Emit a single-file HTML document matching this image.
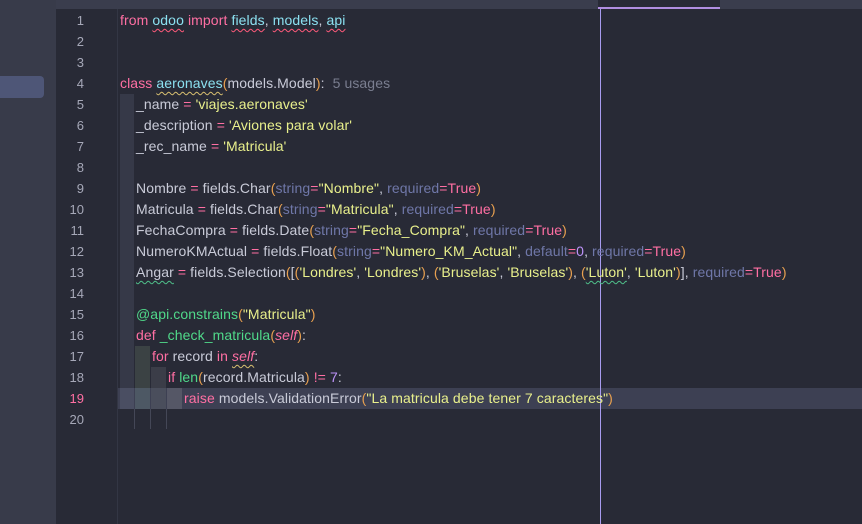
<!DOCTYPE html>
<html><head><style>
body{margin:0;width:862px;height:524px;overflow:hidden;background:#282a36;font-family:"Liberation Sans",sans-serif;position:relative}
#side{position:absolute;left:0;top:0;width:56px;height:524px;background:#383b4a}
#sel{position:absolute;left:0;top:76px;width:44px;height:22px;background:#4e5677;border-radius:0 4px 4px 0}
#top{position:absolute;left:56px;top:0;width:806px;height:9px;background:#3a3d4d}
#tab{position:absolute;left:598px;top:0;width:122px;height:9px;background:#282a36;border-bottom:2px solid #b08ee0;box-sizing:border-box}
#gut{position:absolute;left:117px;top:9px;width:1px;height:515px;background:#333644}
#margin{position:absolute;left:600px;top:9px;width:1px;height:515px;background:#a89cf0}
.ln{position:absolute;left:56px;width:28px;text-align:right;color:#a6a8b8;font-size:13px;line-height:21px}
.c{position:absolute;left:120px;font-size:14px;letter-spacing:0.1px;line-height:21px;color:#c9cbd8;white-space:pre}
.i1{left:136px}.i2{left:152px}.i3{left:168px}.i4{left:184px}
.k{color:#ff6fa3}.n{color:#8be0f0}.s{color:#e9f08c}.p{color:#6f77a8}.b{color:#e8a050}.g{color:#50d98a}.num{color:#bd93f9}.u{color:#7a7e90}
.w{text-decoration:underline wavy #ff5a7a;text-decoration-thickness:1px;text-underline-offset:3px}
.wy{text-decoration:underline wavy #d8c070;text-decoration-thickness:1px;text-underline-offset:3px}
.wg{text-decoration:underline wavy #4fc08a;text-decoration-thickness:1px;text-underline-offset:3px}
.blk{position:absolute}
</style></head><body>
<div id="side"></div><div id="sel"></div>
<div id="top"></div><div id="tab"></div>
<div id="gut"></div>
<div class="blk" style="left:120px;top:94px;width:14px;height:315px;background:#363948"></div>
<div class="blk" style="left:135px;top:346px;width:15px;height:63px;background:#3b4244"></div>
<div class="blk" style="left:151px;top:367px;width:15px;height:42px;background:#3b3d48"></div>
<div class="blk" style="left:118px;top:388px;width:744px;height:21px;background:#3d4053"></div>
<div class="blk" style="left:120px;top:388px;width:14px;height:21px;background:#4a4e62"></div>
<div class="blk" style="left:135px;top:388px;width:15px;height:21px;background:#4d5864"></div>
<div class="blk" style="left:151px;top:388px;width:15px;height:21px;background:#4a4e5c"></div>
<div class="blk" style="left:167px;top:388px;width:15px;height:21px;background:#555766"></div>
<div class="blk" style="left:134px;top:409px;width:1px;height:20px;background:#444757"></div>
<div class="blk" style="left:150px;top:409px;width:1px;height:20px;background:#444757"></div>
<div class="blk" style="left:166px;top:409px;width:1px;height:20px;background:#444757"></div>
<div id="margin"></div>

<div class="ln" style="top:10px">1</div><div class="ln" style="top:31px">2</div><div class="ln" style="top:52px">3</div><div class="ln" style="top:73px">4</div><div class="ln" style="top:94px">5</div><div class="ln" style="top:115px">6</div><div class="ln" style="top:136px">7</div><div class="ln" style="top:157px">8</div><div class="ln" style="top:178px">9</div><div class="ln" style="top:199px">10</div><div class="ln" style="top:220px">11</div><div class="ln" style="top:241px">12</div><div class="ln" style="top:262px">13</div><div class="ln" style="top:283px">14</div><div class="ln" style="top:304px">15</div><div class="ln" style="top:325px">16</div><div class="ln" style="top:346px">17</div><div class="ln" style="top:367px">18</div><div class="ln" style="top:388px;color:#ff6fa3">19</div><div class="ln" style="top:409px">20</div>

<div class="c" style="top:10px"><span class="k">from</span> <span class="n w">odoo</span> <span class="k">import</span> <span class="n w">fields</span>, <span class="n w">models</span>, <span class="n w">api</span></div>
<div class="c" style="top:73px"><span class="k">class</span> <span class="n wy">aeronaves</span><span class="b">(</span>models.Model<span class="b">)</span>:  <span class="u">5 usages</span></div>
<div class="c i1" style="top:94px">_name <span class="k">=</span> <span class="s">'viajes.aeronaves'</span></div>
<div class="c i1" style="top:115px">_description <span class="k">=</span> <span class="s">'Aviones para volar'</span></div>
<div class="c i1" style="top:136px">_rec_name <span class="k">=</span> <span class="s">'Matricula'</span></div>
<div class="c i1" style="top:178px">Nombre <span class="k">=</span> fields.Char<span class="b">(</span><span class="p">string</span><span class="k">=</span><span class="s">"Nombre"</span>, <span class="p">required</span><span class="k">=True</span><span class="b">)</span></div>
<div class="c i1" style="top:199px">Matricula <span class="k">=</span> fields.Char<span class="b">(</span><span class="p">string</span><span class="k">=</span><span class="s">"Matricula"</span>, <span class="p">required</span><span class="k">=True</span><span class="b">)</span></div>
<div class="c i1" style="top:220px">FechaCompra <span class="k">=</span> fields.Date<span class="b">(</span><span class="p">string</span><span class="k">=</span><span class="s">"Fecha_Compra"</span>, <span class="p">required</span><span class="k">=True</span><span class="b">)</span></div>
<div class="c i1" style="top:241px">NumeroKMActual <span class="k">=</span> fields.Float<span class="b">(</span><span class="p">string</span><span class="k">=</span><span class="s">"Numero_KM_Actual"</span>, <span class="p">default</span><span class="k">=</span><span class="num">0</span>, <span class="p">required</span><span class="k">=True</span><span class="b">)</span></div>
<div class="c i1" style="top:262px"><span class="wg">Angar</span> <span class="k">=</span> fields.Selection<span class="b">(</span>[<span class="b">(</span><span class="s">'Londres'</span>, <span class="s">'Londres'</span><span class="b">)</span>, <span class="b">(</span><span class="s">'Bruselas'</span>, <span class="s">'Bruselas'</span><span class="b">)</span>, <span class="b">(</span><span class="s wg">'Luton'</span>, <span class="s">'Luton'</span><span class="b">)</span>], <span class="p">required</span><span class="k">=True</span><span class="b">)</span></div>
<div class="c i1" style="top:304px"><span class="g">@api.constrains</span><span class="b">(</span><span class="s">"Matricula"</span><span class="b">)</span></div>
<div class="c i1" style="top:325px"><span class="k">def</span> <span class="g">_check_matricula</span><span class="b">(</span><span class="k" style="font-style:italic">self</span><span class="b">)</span>:</div>
<div class="c i2" style="top:346px"><span class="k">for</span> record <span class="k">in</span> <span class="k wy" style="font-style:italic">self</span>:</div>
<div class="c i3" style="top:367px"><span class="k">if</span> <span class="g">len</span><span class="b">(</span>record.Matricula<span class="b">)</span> <span class="k">!=</span> <span class="num">7</span>:</div>
<div class="c i4" style="top:388px"><span class="k">raise</span> models.ValidationError<span class="b">(</span><span class="s">"La matricula debe tener 7 caracteres"</span><span class="b">)</span></div>
</body></html>
